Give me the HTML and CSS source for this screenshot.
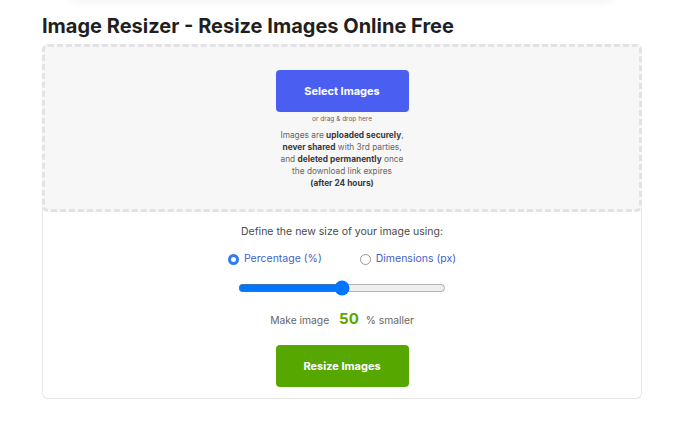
FILE: index.html
```html
<!DOCTYPE html>
<html lang="en">
<head>
    <meta charset="UTF-8">
    <title>Image Resizer</title>
    <link rel="stylesheet" href="styles.css">
</head>
<body>
    <div class="topbar"></div>
    <div class="page">
        <h1 class="title">Image Resizer - Resize Images Online Free</h1>
        <div class="card">
            <div class="dropzone">
                <button class="btn btn-select">Select Images</button>
                <div class="hint">or drag &amp; drop here</div>
                <p class="note">Images are <b>uploaded securely</b>,<br>
                    <b>never shared</b> with 3rd parties,<br>
                    and <b>deleted permanently</b> once<br>
                    the download link expires<br>
                    <b>(after 24 hours)</b></p>
            </div>
            <div class="options">
                <div class="define">Define the new size of your image using:</div>
                <div class="modes">
                    <label class="mode"><span class="radio checked"></span>Percentage (%)</label>
                    <label class="mode"><span class="radio"></span>Dimensions (px)</label>
                </div>
                <input class="slider" type="range" min="0" max="100" value="50">
                <div class="amount">Make image <span class="num">50</span> % smaller</div>
                <button class="btn btn-resize">Resize Images</button>
            </div>
        </div>
    </div>
</body>
</html>
```

FILE: styles.css
```css
* {
    margin: 0;
    padding: 0;
    box-sizing: border-box;
}

body {
    font-family: Inter, "Noto Sans", sans-serif;
    background-color: #fff;
    color: #555;
}

.topbar {
    height: 20px;
    margin: -20px 70px 0;
    border-radius: 12px;
    background-color: #fff;
    box-shadow: 0 2px 10px rgba(0, 0, 0, 0.06);
}

.page {
    width: 600px;
    margin-left: 42px;
    padding-top: 14px;
}

.title {
    font-size: 20px;
    line-height: 24px;
    font-weight: 700;
    color: #1f1f1f;
    margin-bottom: 6px;
}

.card {
    border: 1px solid #e5e5e5;
    border-top: none;
    border-radius: 6px;
    padding-bottom: 11px;
}

.dropzone {
    margin: 0 -1px;
    height: 168px;
    border: 3px dashed #e3e3e6;
    border-radius: 6px;
    background-color: #f7f7f8;
    display: flex;
    flex-direction: column;
    align-items: center;
    padding-top: 23px;
}

.btn {
    width: 133px;
    height: 42px;
    border: none;
    border-radius: 4px;
    color: #fff;
    font-family: Inter, "Noto Sans", sans-serif;
    font-weight: 700;
    font-size: 11px;
    cursor: pointer;
}

.btn-select {
    background-color: #4a5ff2;
}

.hint {
    font-size: 6.5px;
    line-height: 10px;
    margin-top: 2px;
    color: #666;
}

.note {
    margin-top: 5px;
    font-size: 8.3px;
    line-height: 12px;
    text-align: center;
    color: #666;
}

.note b {
    color: #3a3a3a;
}

.options {
    display: flex;
    flex-direction: column;
    align-items: center;
    padding-top: 13px;
}

.define {
    font-size: 10.5px;
    line-height: 14px;
    color: #4a4a4a;
}

.modes {
    display: flex;
    gap: 38px;
    margin-top: 13px;
}

.mode {
    display: flex;
    align-items: center;
    font-size: 10.5px;
    line-height: 14px;
    color: #3d62c9;
}

.radio {
    width: 11px;
    height: 11px;
    border-radius: 50%;
    border: 1px solid #999;
    margin-right: 5px;
    background-color: #fff;
}

.radio.checked {
    border: 3px solid #2f7cf6;
}

.slider {
    width: 208px;
    margin-top: 14px;
}

.amount {
    margin-top: 14px;
    font-size: 10.3px;
    line-height: 18px;
    color: #666;
}

.num {
    font-size: 15px;
    font-weight: 700;
    color: #56a800;
    margin: 0 4px 0 7px;
}

.btn-resize {
    margin-top: 16px;
    background-color: #56a800;
}
```
